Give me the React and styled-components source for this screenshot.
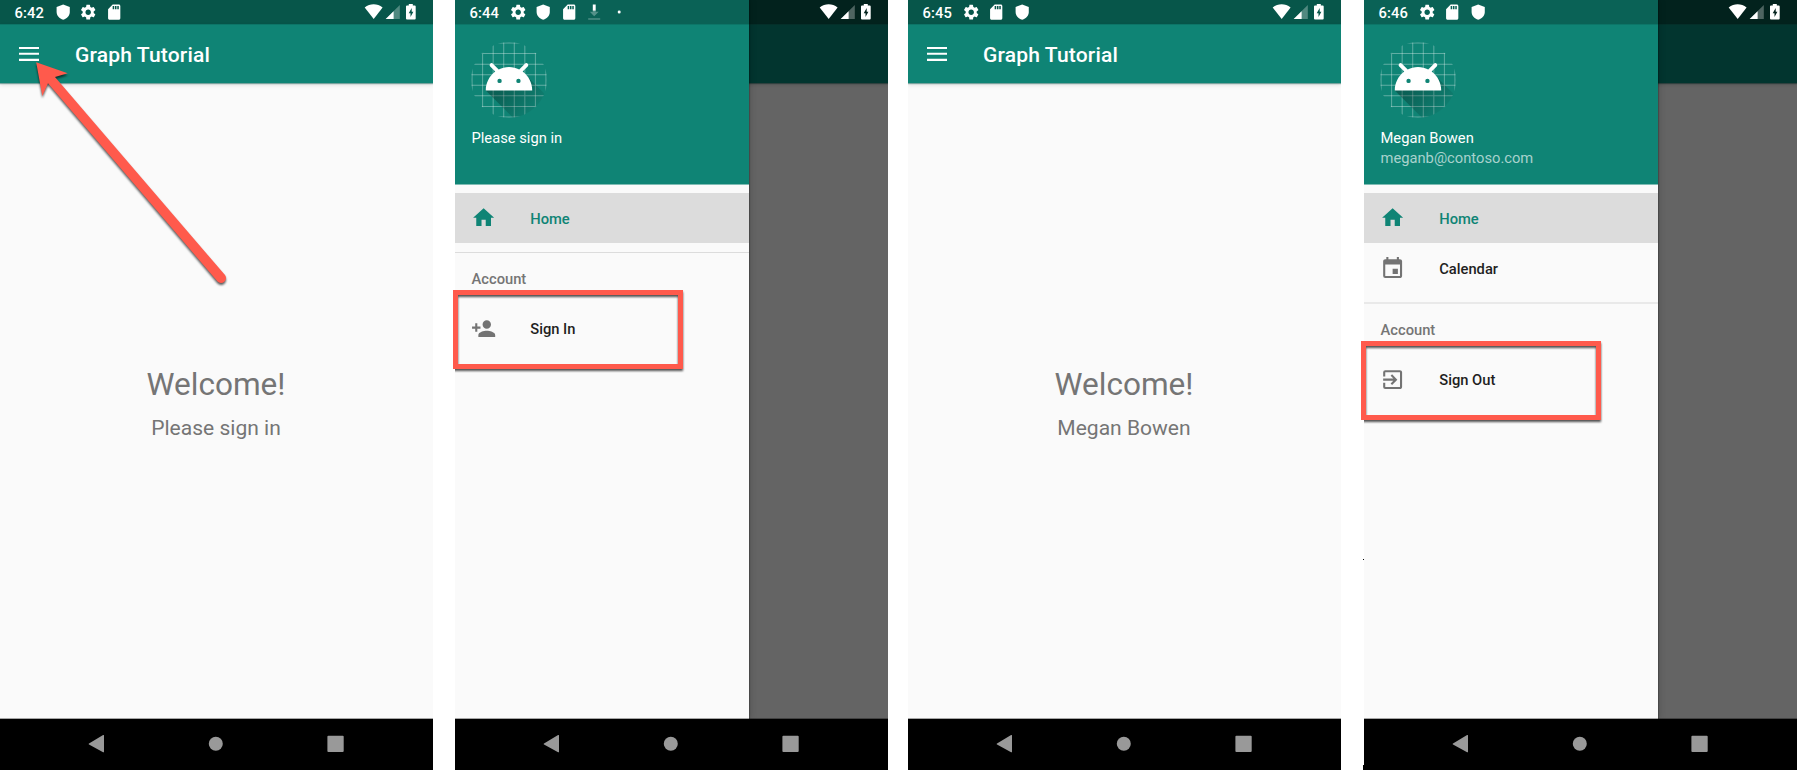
import React from "react";
import styled, { createGlobalStyle } from "styled-components";
import { MdEvent, MdExitToApp, MdHome, MdPersonAdd, MdSdCard, MdSettings } from "react-icons/md";

const GlobalStyle = createGlobalStyle`
  *, *::before, *::after { box-sizing: border-box; }
  body {
    margin: 0;
    background: #fff;
    font-family: Roboto, "Liberation Sans", sans-serif;
    overflow: hidden;
  }
`;

const teal = "#0f8475";
const red = "#ff5a4c";

const Board = styled.main`
  position: relative;
  display: flex;
  width: 1797px;
  height: 770px;
`;

const Device = styled.section`
  display: grid;
  grid-template-rows: 719px 51px;
  width: 433px;
  flex: none;
  margin-left: ${(p) => p.$gap}px;
`;

const Screen = styled.div`
  display: grid;
  grid-template: minmax(0, 1fr) / minmax(0, 1fr);
  overflow: hidden;
  & > * { grid-area: 1 / 1; }
`;

const AppLayer = styled.div`
  display: flex;
  flex-direction: column;
  background: #fafafa;
  border-bottom: 1px solid #a6a6a6;
`;

const StatusBackdrop = styled.div`
  height: 24px;
  background: #07564a;
`;

const AppBar = styled.header`
  display: flex;
  align-items: center;
  gap: 36px;
  height: 59px;
  padding-left: 19px;
  background: ${(p) => (p.$covered ? "#058475" : teal)};
  border-top: 1px solid #0c7567;
  box-shadow: 0 1px 1px rgba(15, 100, 90, 0.5), 0 2px 4px rgba(0, 0, 0, 0.12);
  color: #fff;
`;

const AppTitle = styled.h1`
  margin: 0;
  font-size: 21.04px;
  font-weight: 500;
  letter-spacing: 0.15px;
  line-height: 25px;
`;

const Body = styled.div`
  flex: 1;
  padding: 281px 1px 0 0;
  text-align: center;
  color: #757575;
`;

const Welcome = styled.div`
  font-size: 31.56px;
  line-height: 42px;
`;

const Subtitle = styled.div`
  margin-top: 7px;
  font-size: 21.04px;
  line-height: 30px;
`;

const Scrim = styled.div`
  background: rgba(0, 0, 0, 0.6);
  z-index: 1;
`;

const Drawer = styled.aside`
  z-index: 2;
  width: 294px;
  background: #fafafa;
  border-bottom: 1px solid #a6a6a6;
  box-shadow: 1px 0 1px rgba(0, 0, 0, 0.2), 1px 0 7px rgba(0, 0, 0, 0.18);
`;

const DrawerStatusShade = styled.div`
  height: 24px;
  background: #0a6256;
`;

const DrawerHeader = styled.div`
  height: 161px;
  padding: 17px 17px 0 16px;
  background: ${teal};
  border-top: 1px solid #0c7668;
  border-bottom: 1px solid #7fbcb4;
`;

const AccountName = styled.div`
  margin: 10px 0 0 0.5px;
  color: #fff;
  font-size: 14.73px;
  line-height: 20px;
`;

const AccountMail = styled.div`
  margin: 0 0 0 0.5px;
  color: #a8d2cd;
  font-size: 14.73px;
  line-height: 20px;
`;

const Menu = styled.nav`
  display: flex;
  flex-direction: column;
  padding-top: 8px;
`;

const MenuItem = styled.div`
  display: flex;
  align-items: center;
  height: ${(p) => p.$height || 50}px;
  padding-left: 16px;
  background: ${(p) => (p.$active ? "#dcdcdc" : "transparent")};
  color: ${(p) => (p.$active ? teal : "#1f1f1f")};
  font-size: 14.73px;
  font-weight: 500;
  svg {
    width: 25.25px;
    height: 25.25px;
    margin-right: 34px;
    color: ${(p) => (p.$active ? teal : "#737373")};
  }
`;

const ItemText = styled.span`
  line-height: 18px;
  padding-top: ${(p) => p.$drop || 0}px;
`;

const Group = styled.div`
  margin-top: ${(p) => (p.$thick ? 8 : 9)}px;
  border-top: ${(p) => (p.$thick ? "2px solid #e9e9e9" : "1px solid #dcdcdc")};
`;

const GroupTitle = styled.div`
  padding-left: 16.5px;
  height: 51px;
  line-height: 52px;
  color: #757575;
  font-size: 14.73px;
  font-weight: 500;
`;

const StatusBar = styled.div`
  z-index: 3;
  display: flex;
  justify-content: space-between;
  height: 24px;
  padding: 0 17px 0 14.4px;
  color: #fff;
`;

const StatusGroup = styled.div`
  display: flex;
  align-items: center;
`;

const Clock = styled.span`
  width: 36.3px;
  padding-top: 1px;
  font-size: 14.73px;
  font-weight: 500;
  letter-spacing: 0.2px;
  line-height: 20px;
`;

const StatusSlot = styled.span`
  display: flex;
  justify-content: center;
  width: 25.3px;
  svg { width: 18.4px; height: 18.4px; flex: none; }
`;

const NavBar = styled.footer`
  display: flex;
  align-items: center;
  padding-left: 36px;
  background: #000;
  svg { width: 120px; height: 24px; margin-top: -1px; flex: none; }
`;

const Highlight = styled.div`
  position: absolute;
  z-index: 5;
  left: ${(p) => p.$x}px;
  top: ${(p) => p.$y}px;
  width: ${(p) => p.$w}px;
  height: 79px;
  border: 5px solid ${red};
  filter: drop-shadow(0 2.5px 1px rgba(0, 0, 0, 0.68));
  clip-path: polygon(0 0, 110% 0, 110% 120%, ${(p) => p.$edge}px 120%, ${(p) => p.$edge}px 100%, 0 100%);
`;

const Arrow = styled.svg`
  position: absolute;
  z-index: 5;
  left: 0;
  top: 0;
  width: 240px;
  height: 300px;
  filter: drop-shadow(0 2px 1px rgba(0, 0, 0, 0.65));
`;

const Speck = styled.i`
  position: absolute;
  left: 1363px;
  top: ${(p) => p.$y}px;
  width: 1px;
  height: ${(p) => p.$h}px;
  background: #000;
`;

const Shield = () => (
  <svg viewBox="0 0 24 24" fill="currentColor">
    <path d="M12 2 3.4 5.2v6.6c0 4.8 3.5 8.4 8.6 10.1 5.1-1.7 8.6-5.3 8.6-10.1V5.2z" />
  </svg>
);

const Download = () => (
  <svg viewBox="0 0 18.4 18.4" fill="#fff">
    <path d="M7.8 1.5h2.9v6.2H7.8z" />
    <path d="M7.8 7.7h2.9v1h3L9.2 13.2 4.8 8.7h3z" opacity=".3" />
    <path d="M3.2 15.4h12v1.2h-12z" opacity=".35" />
  </svg>
);

const Dot = () => (
  <svg viewBox="0 0 18.4 18.4" fill="#fff">
    <circle cx="9.2" cy="9" r="1.5" />
  </svg>
);

const statusIcons = {
  shield: <Shield />,
  gear: <MdSettings />,
  card: <MdSdCard />,
  download: <Download />,
  dot: <Dot />,
};

const Signals = () => (
  <svg width="54" height="24" viewBox="362 0 54 24" fill="#fff">
    <path d="M364.7 7.4C370 3.2 377.3 3.2 382.6 7.4L373.7 19z" />
    <path d="M399.8 5v14.1h-14.1z" opacity=".3" />
    <path d="M393.6 11.2v7.9h-7.9z" />
    <path
      fillRule="evenodd"
      d="M408.8 4h4v1.6h1.9q1 0 1 1v12q0 1-1 1h-7.7q-1 0-1-1v-12q0-1 1-1h1.8zM411.7 8 408.7 13.2h1.8v3.8l2.9-5.2h-1.7z"
    />
  </svg>
);

const Hamburger = () => (
  <svg width="20" height="16" viewBox="0 0 20 16" fill="#fff">
    <path d="M0 .9h20v2H0zM0 6.7h20v2.1H0zM0 12.7h20v2.2H0z" />
  </svg>
);

const gridStops = [19, 29, 39, 49, 59, 69, 79, 89];

const Avatar = ({ id }) => (
  <svg width="76" height="76" viewBox="18 18 72 72" display="block">
    <defs>
      <clipPath id={`${id}-round`}>
        <circle cx="54" cy="54" r="36" />
      </clipPath>
      <linearGradient id={`${id}-shade`} gradientUnits="userSpaceOnUse" x1="48.77" y1="61.09" x2="78.59" y2="90.92">
        <stop offset="0" stopColor="#000" stopOpacity=".27" />
        <stop offset="1" stopColor="#000" stopOpacity="0" />
      </linearGradient>
    </defs>
    <g clipPath={`url(#${id}-round)`}>
      <g stroke="#fff" strokeOpacity=".34" strokeWidth="0.95">
        {gridStops.map((n) => (
          <path key={n} d={`M${n} 18V90M18 ${n}H90`} />
        ))}
      </g>
      <path
        fill={`url(#${id}-shade)`}
        d="M32,64C32,64 38.39,52.99 44.13,50.95C51.37,48.37 70.14,49.57 70.14,49.57L108.26,87.69L108,109.01L75.97,107.97L32,64Z"
      />
      <path
        fill="#fff"
        d="M66.94,46.02C72.44,50.07 76,56.61 76,64L32,64C32,56.61 35.56,50.11 40.98,46.06L36.18,41.19C35.45,40.45 35.45,39.3 36.18,38.56C36.91,37.81 38.05,37.81 38.78,38.56L44.25,44.05C47.18,42.57 50.48,41.71 54,41.71C57.48,41.71 60.78,42.57 63.68,44.05L69.11,38.56C69.84,37.81 70.98,37.81 71.71,38.56C72.44,39.3 72.44,40.45 71.71,41.19Z"
      />
      <circle cx="62.94" cy="54.88" r="2.06" fill={teal} />
      <circle cx="45.06" cy="54.88" r="2.06" fill={teal} />
    </g>
  </svg>
);

const SystemNav = () => (
  <NavBar>
    <svg viewBox="0 0 120 24" fill="#999">
      <path d="M68 3.6v16.1q0 1-.9.5L53 12.5q-.9-.6 0-1.1L67.1 3.1q.9-.5.9.5z" />
    </svg>
    <svg viewBox="0 0 120 24" fill="#999">
      <circle cx="59.8" cy="11.8" r="7" />
    </svg>
    <svg viewBox="0 0 120 24" fill="#999">
      <rect x="51.4" y="3.8" width="16.3" height="16.3" rx="1" />
    </svg>
  </NavBar>
);

function Phone({ gap, time, icons, greeting, children }) {
  return (
    <Device $gap={gap}>
      <Screen>
        <AppLayer>
          <StatusBackdrop />
          <AppBar $covered={!greeting}>
            {greeting && (
              <>
                <Hamburger />
                <AppTitle>Graph Tutorial</AppTitle>
              </>
            )}
          </AppBar>
          {greeting && (
            <Body>
              <Welcome>Welcome!</Welcome>
              <Subtitle>{greeting}</Subtitle>
            </Body>
          )}
        </AppLayer>
        {children && <Scrim />}
        {children}
        <StatusBar>
          <StatusGroup>
            <Clock>{time}</Clock>
            {icons.map((name) => (
              <StatusSlot key={name}>{statusIcons[name]}</StatusSlot>
            ))}
          </StatusGroup>
          <Signals />
        </StatusBar>
      </Screen>
      <SystemNav />
    </Device>
  );
}

function SideDrawer({ id, name, mail, items, action }) {
  return (
    <Drawer>
      <DrawerStatusShade />
      <DrawerHeader>
        <Avatar id={id} />
        <AccountName>{name}</AccountName>
        {mail && <AccountMail>{mail}</AccountMail>}
      </DrawerHeader>
      <Menu>
        <MenuItem $active>
          <MdHome />
          <ItemText $drop={2}>Home</ItemText>
        </MenuItem>
        {items}
        <Group $thick={Boolean(items)}>
          <GroupTitle>Account</GroupTitle>
          {action}
        </Group>
      </Menu>
    </Drawer>
  );
}

export default function App() {
  return (
    <>
      <GlobalStyle />
      <Board>
        <Phone gap={0} time="6:42" icons={["shield", "gear", "card"]} greeting="Please sign in" />
        <Phone gap={22} time="6:44" icons={["gear", "shield", "card", "download", "dot"]}>
          <SideDrawer
            id="guest"
            name="Please sign in"
            action={
              <MenuItem>
                <MdPersonAdd />
                <ItemText>Sign In</ItemText>
              </MenuItem>
            }
          />
        </Phone>
        <Phone gap={20} time="6:45" icons={["gear", "card", "shield"]} greeting="Megan Bowen" />
        <Phone gap={23} time="6:46" icons={["gear", "card", "shield"]}>
          <SideDrawer
            id="member"
            name="Megan Bowen"
            mail="meganb@contoso.com"
            items={
              <MenuItem $height={51}>
                <MdEvent />
                <ItemText $drop={1}>Calendar</ItemText>
              </MenuItem>
            }
            action={
              <MenuItem>
                <MdExitToApp />
                <ItemText>Sign Out</ItemText>
              </MenuItem>
            }
          />
        </Phone>
        <Arrow viewBox="0 0 240 300" fill={red}>
          <path d="M36.2 62.2 67.7 73.3 55 77 225 275.1A4.9 4.9 0 0 1 217.6 281.5L48 83.2 42.3 96z" />
        </Arrow>
        <Highlight $x={453} $y={290} $w={230} $edge={2} />
        <Highlight $x={1361} $y={341} $w={240} $edge={3} />
        <Speck $y={559} $h={1} />
        <Speck $y={765} $h={5} />
      </Board>
    </>
  );
}
